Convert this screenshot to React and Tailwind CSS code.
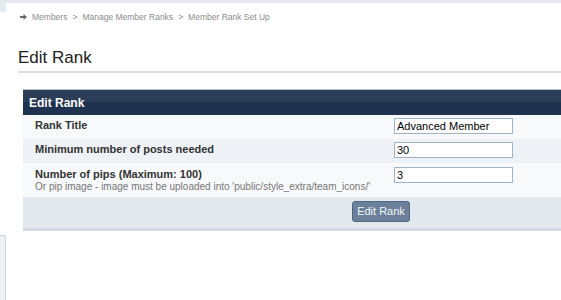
import { useState } from 'react'

const rows = [
  { label: 'Rank Title', value: 'Advanced Member', bg: 'bg-[#f7f9fb]' },
  { label: 'Minimum number of posts needed', value: '30', bg: 'bg-[#eef1f5]' },
  {
    label: 'Number of pips (Maximum: 100)',
    hint: "Or pip image - image must be uploaded into 'public/style_extra/team_icons/'",
    value: '3',
    bg: 'bg-[#f7f9fb]',
  },
]

export default function App() {
  const [values, setValues] = useState(rows.map((r) => r.value))

  return (
    <div className="w-[561px] h-[300px] overflow-hidden bg-white font-['Liberation_Sans',Arial,sans-serif]">
      <div className="h-[3px] bg-[#e3e9ef]" />
      <div className="flex h-[297px]">
        {/* sidebar edge peeking in from the left */}
        <div className="w-[6px] shrink-0 flex flex-col">
          <div className="h-[9px] bg-[#e6ebf1]" />
          <div className="mt-[223px] flex-1 bg-[#eef1f5] border-t border-r border-[#cbd3dd] rounded-tr-[2px]" />
        </div>

        <div className="flex-1 min-w-0 pt-[9px]">
          <Breadcrumb />

          <h1 className="ml-[12px] mt-[26px] pb-[3px] border-b-2 border-[#dedede] text-[17px] leading-[20px] text-[#222]">
            Edit Rank
          </h1>

          <form
            className="ml-[17px] mt-[16px] w-[716px] border-t border-[#b9c3cf] border-b-[3px] border-b-[#d2d9e2]"
            onSubmit={(e) => e.preventDefault()}
          >
            <div className="h-[25px] flex items-center pl-[6px] bg-[linear-gradient(to_bottom,#2c3e57_50%,#1f3351_50%)] text-[12px] font-bold text-white">
              Edit Rank
            </div>

            {rows.map((r, i) => (
              <div
                key={r.label}
                className={`grid grid-cols-[371px_1fr] items-start ${r.bg} ${r.hint ? 'pt-[4px] pb-[4px]' : 'pt-[3px] pb-[5px]'}`}
              >
                <div className="pl-[12px]">
                  <div className="text-[11px] leading-[14px] font-bold text-[#333]">{r.label}</div>
                  {r.hint && <div className="text-[10px] leading-[12px] text-[#777]">{r.hint}</div>}
                </div>
                <input
                  className="block w-[119px] h-[16px] p-0 pl-[2px] border border-[#9eb2c8] bg-white text-[11px] leading-[14px] text-black outline-none"
                  value={values[i]}
                  onChange={(e) => setValues(values.map((v, j) => (j === i ? e.target.value : v)))}
                />
              </div>
            ))}

            <div className="h-[31px] bg-[#e3e8ef] flex justify-center items-start pt-[4px]">
              <button
                type="submit"
                className="h-[21px] w-[58px] rounded-[3px] border border-[#506681] bg-[#6b809a] text-[11px] leading-[19px] text-[#f3f6f9]"
              >
                Edit Rank
              </button>
            </div>
          </form>
        </div>
      </div>
    </div>
  )
}

function Breadcrumb() {
  const crumbs = ['Members', 'Manage Member Ranks', 'Member Rank Set Up']
  return (
    <div className="ml-[14px] h-[10px] flex items-center text-[8.5px] leading-[10px] text-[#8c8c8c]">
      <svg width="7" height="6" viewBox="0 0 7 6" className="mr-[5px]">
        <path d="M0 2h3.5V0L7 3 3.5 6V4H0z" fill="#666" />
      </svg>
      {crumbs.map((c, i) => (
        <span key={c} className="flex items-center">
          {i > 0 && <span className="mx-[5px]">&gt;</span>}
          {c}
        </span>
      ))}
    </div>
  )
}
